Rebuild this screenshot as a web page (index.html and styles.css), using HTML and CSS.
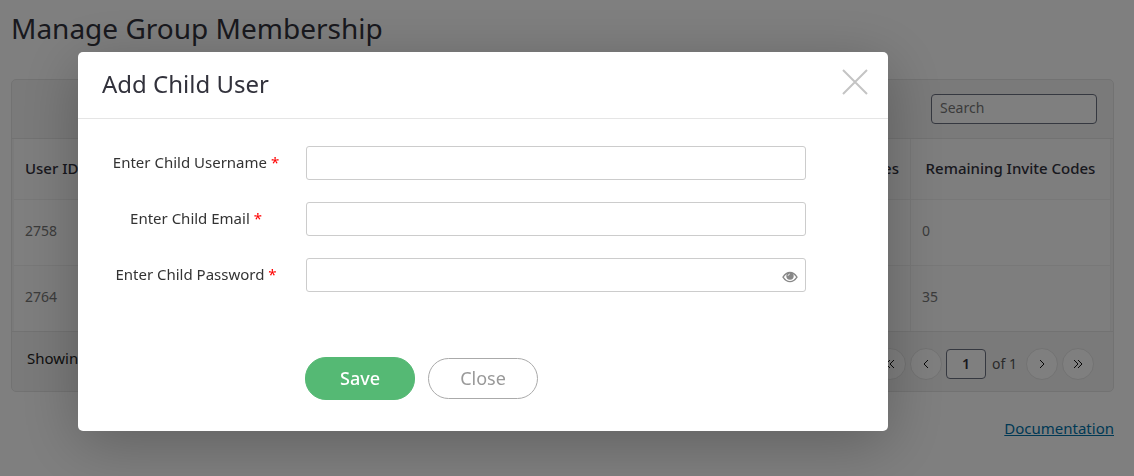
FILE: index.html
```html
<!DOCTYPE html>
<html lang="en">
<head>
<meta charset="utf-8">
<title>Manage Group Membership</title>
<link rel="stylesheet" href="styles.css">
</head>
<body>
<main class="page">
  <h1 class="page-title">Manage Group Membership</h1>
  <section class="card">
    <div class="toolbar">
      <input class="search" type="search" placeholder="Search" aria-label="Search">
    </div>
    <div class="table-wrap">
      <table class="members">
        <thead>
          <tr><th class="col-id">User ID</th><th class="col-codes">Invite Codes</th><th class="col-remaining">Remaining Invite Codes</th></tr>
        </thead>
        <tbody>
          <tr><td>2758</td><td></td><td>0</td></tr>
          <tr><td>2764</td><td></td><td>35</td></tr>
        </tbody>
      </table>
    </div>
    <div class="footer">
      <span class="showing">Showing</span>
      <nav class="pager" aria-label="Pages">
        <button class="page-btn" type="button" aria-label="First page"><svg width="12" height="12" viewBox="0 0 12 12"><path d="M6 2 2 6l4 4M10 2 6 6l4 4"/></svg></button>
        <button class="page-btn" type="button" aria-label="Previous page"><svg width="12" height="12" viewBox="0 0 12 12"><path d="M8 2 4 6l4 4"/></svg></button>
        <input class="page-number" type="text" value="1" aria-label="Page number">
        <span class="page-total">of 1</span>
        <button class="page-btn" type="button" aria-label="Next page"><svg width="12" height="12" viewBox="0 0 12 12"><path d="M4 2l4 4-4 4"/></svg></button>
        <button class="page-btn" type="button" aria-label="Last page"><svg width="12" height="12" viewBox="0 0 12 12"><path d="M2 2l4 4-4 4M6 2l4 4-4 4"/></svg></button>
      </nav>
    </div>
  </section>
  <p class="docs"><a href="#">Documentation</a></p>
</main>

<div class="overlay">
  <div class="modal" role="dialog" aria-modal="true" aria-labelledby="modal-title">
    <header class="modal-header">
      <h2 class="modal-title" id="modal-title">Add Child User</h2>
      <button class="dismiss" type="button" aria-label="Dismiss"><svg width="26" height="26" viewBox="0 0 26 26"><path d="M1 1l24 24M25 1 1 25"/></svg></button>
    </header>
    <form class="modal-form">
      <div class="field">
        <label for="username">Enter Child Username <span class="required">*</span></label>
        <input class="text" id="username" type="text">
      </div>
      <div class="field">
        <label for="email">Enter Child Email <span class="required">*</span></label>
        <input class="text" id="email" type="email">
      </div>
      <div class="field">
        <label for="password">Enter Child Password <span class="required">*</span></label>
        <div class="password">
          <input class="text" id="password" type="password">
          <button class="reveal" type="button" aria-label="Show password"><svg width="16" height="12" viewBox="0 0 16 12"><path class="lid" d="M1 6.2C3 3 5.300 1.500 8 1.500S13 3 15 6.200C13 9.200 10.700 10.700 8 10.700S3 9.200 1 6.200Z"/><circle cx="8" cy="5" r="3.700"/><path class="glint" d="M6 5a2 2 0 0 1 2-2"/></svg></button>
        </div>
      </div>
      <div class="actions">
        <button class="btn save" type="submit">Save</button>
        <button class="btn close" type="button">Close</button>
      </div>
    </form>
  </div>
</div>
</body>
</html>
```
FILE: styles.css
```css
* {
  box-sizing: border-box;
}

body {
  margin: 0;
  background: #fff;
  color: #222;
  font: 15px/20px "Noto Sans", "Open Sans", sans-serif;
}

input,
button {
  font: inherit;
}

button {
  padding: 0;
  cursor: pointer;
}

svg {
  display: block;
  fill: none;
}

.page {
  padding: 8px 20px 0 11px;
}

.page-title {
  margin: 0 0 31px;
  color: #32323c;
  font-size: 28px;
  font-weight: 400;
  line-height: 40px;
}

.card {
  border: 1px solid #e5e5e5;
  border-radius: 5px;
  background: #f4f4f4;
}

.toolbar {
  display: flex;
  justify-content: flex-end;
  padding: 14px 16px;
  border-bottom: 1px solid #e5e5e5;
}

.search {
  width: 166px;
  height: 30px;
  padding: 0 8px 3px;
  border: 1px solid #6b7080;
  border-radius: 4px;
  background: #fff;
  font-size: 14px;
}

.search::placeholder {
  color: #777;
}

.table-wrap {
  padding: 0 2px;
}

.members {
  width: 100%;
  table-layout: fixed;
  border-collapse: collapse;
  background: #fff;
}

.members th,
.members td {
  height: 66px;
  padding: 0 11px 2px;
  border-bottom: 1px solid #f0f0f0;
  border-right: 1px solid #f0f0f0;
  text-align: left;
}

.members th {
  height: 60px;
  background: #fcfcfc;
  color: #32323c;
  font-weight: 500;
}

.members td {
  color: #777;
  font-size: 14px;
}

.members tbody tr:last-child td {
  border-bottom: 0;
  background: #fcfcfc;
}

.members .col-id {
  width: 200px;
}

.members .col-codes {
  text-align: right;
}

.members .col-remaining {
  width: 200px;
  text-align: center;
  white-space: nowrap;
}

.footer {
  display: flex;
  justify-content: space-between;
  padding: 16px 19px 11px 15px;
  border-top: 1px solid #e5e5e5;
}

.pager {
  display: flex;
  align-items: center;
  gap: 4px;
}

.page-btn {
  display: grid;
  place-items: center;
  width: 32px;
  height: 32px;
  border: 1px solid #e5e5e5;
  border-radius: 50%;
  background: #fff;
  stroke: #111;
}

.page-number {
  width: 40px;
  height: 30px;
  padding: 0 0 2px;
  border: 1px solid #6b7080;
  border-radius: 4px;
  background: #fff;
  color: #32323c;
  font-size: 14px;
  font-weight: 600;
  text-align: center;
}

.page-total {
  padding: 0 5px 0 2px;
  color: #555;
  font-size: 14px;
}

.docs {
  margin: 26px 0 0;
  text-align: right;
}

.docs a {
  color: #0073aa;
}

.overlay {
  position: fixed;
  inset: 0;
  padding: 52px 246px 45px 78px;
  overflow: hidden;
  background: rgba(0, 0, 0, 0.5);
}

.modal {
  border-radius: 5px;
  background: #fff;
  box-shadow: 0 12px 60px rgba(0, 0, 0, 0.25);
}

.modal-header {
  display: flex;
  align-items: center;
  justify-content: space-between;
  padding: 12px 20px 14px 24px;
  border-bottom: 1px solid #e5e5e5;
}

.modal-title {
  margin: 0;
  color: #32323c;
  font-size: 24px;
  font-weight: 400;
  line-height: 40px;
}

.dismiss {
  padding-bottom: 4px;
  border: 0;
  background: none;
  stroke: #c4c4c4;
  stroke-width: 2;
}

.modal-form {
  display: grid;
  gap: 22px;
  padding: 27px 82px 31px 18px;
}

.field {
  display: grid;
  grid-template-columns: 200px 1fr;
  gap: 10px;
  align-items: center;
}

.field label {
  padding-bottom: 2px;
  color: #333;
  text-align: center;
}

.required {
  color: #f00;
}

.text {
  width: 100%;
  height: 34px;
  padding: 0 10px;
  border: 1px solid #ccc;
  border-radius: 3px;
  background: #fff;
}

.password {
  position: relative;
}

.reveal {
  position: absolute;
  top: 13px;
  right: 8px;
  border: 0;
  background: none;
}

.reveal circle {
  fill: #888;
}

.reveal .lid {
  stroke: #888;
  stroke-width: 1.3;
}

.reveal .glint {
  stroke: #ddd;
}

.actions {
  display: flex;
  align-items: center;
  gap: 13px;
  padding: 43px 0 0 209px;
}

.btn {
  width: 110px;
  height: 41px;
  padding-bottom: 2px;
  border: 1px solid #aaa;
  border-radius: 21px;
  background: #fff;
  color: #999;
  font-size: 18px;
}

.save {
  height: 43px;
  border-color: #55b974;
  background: #55b974;
  color: #fff;
  font-weight: 500;
}
```
